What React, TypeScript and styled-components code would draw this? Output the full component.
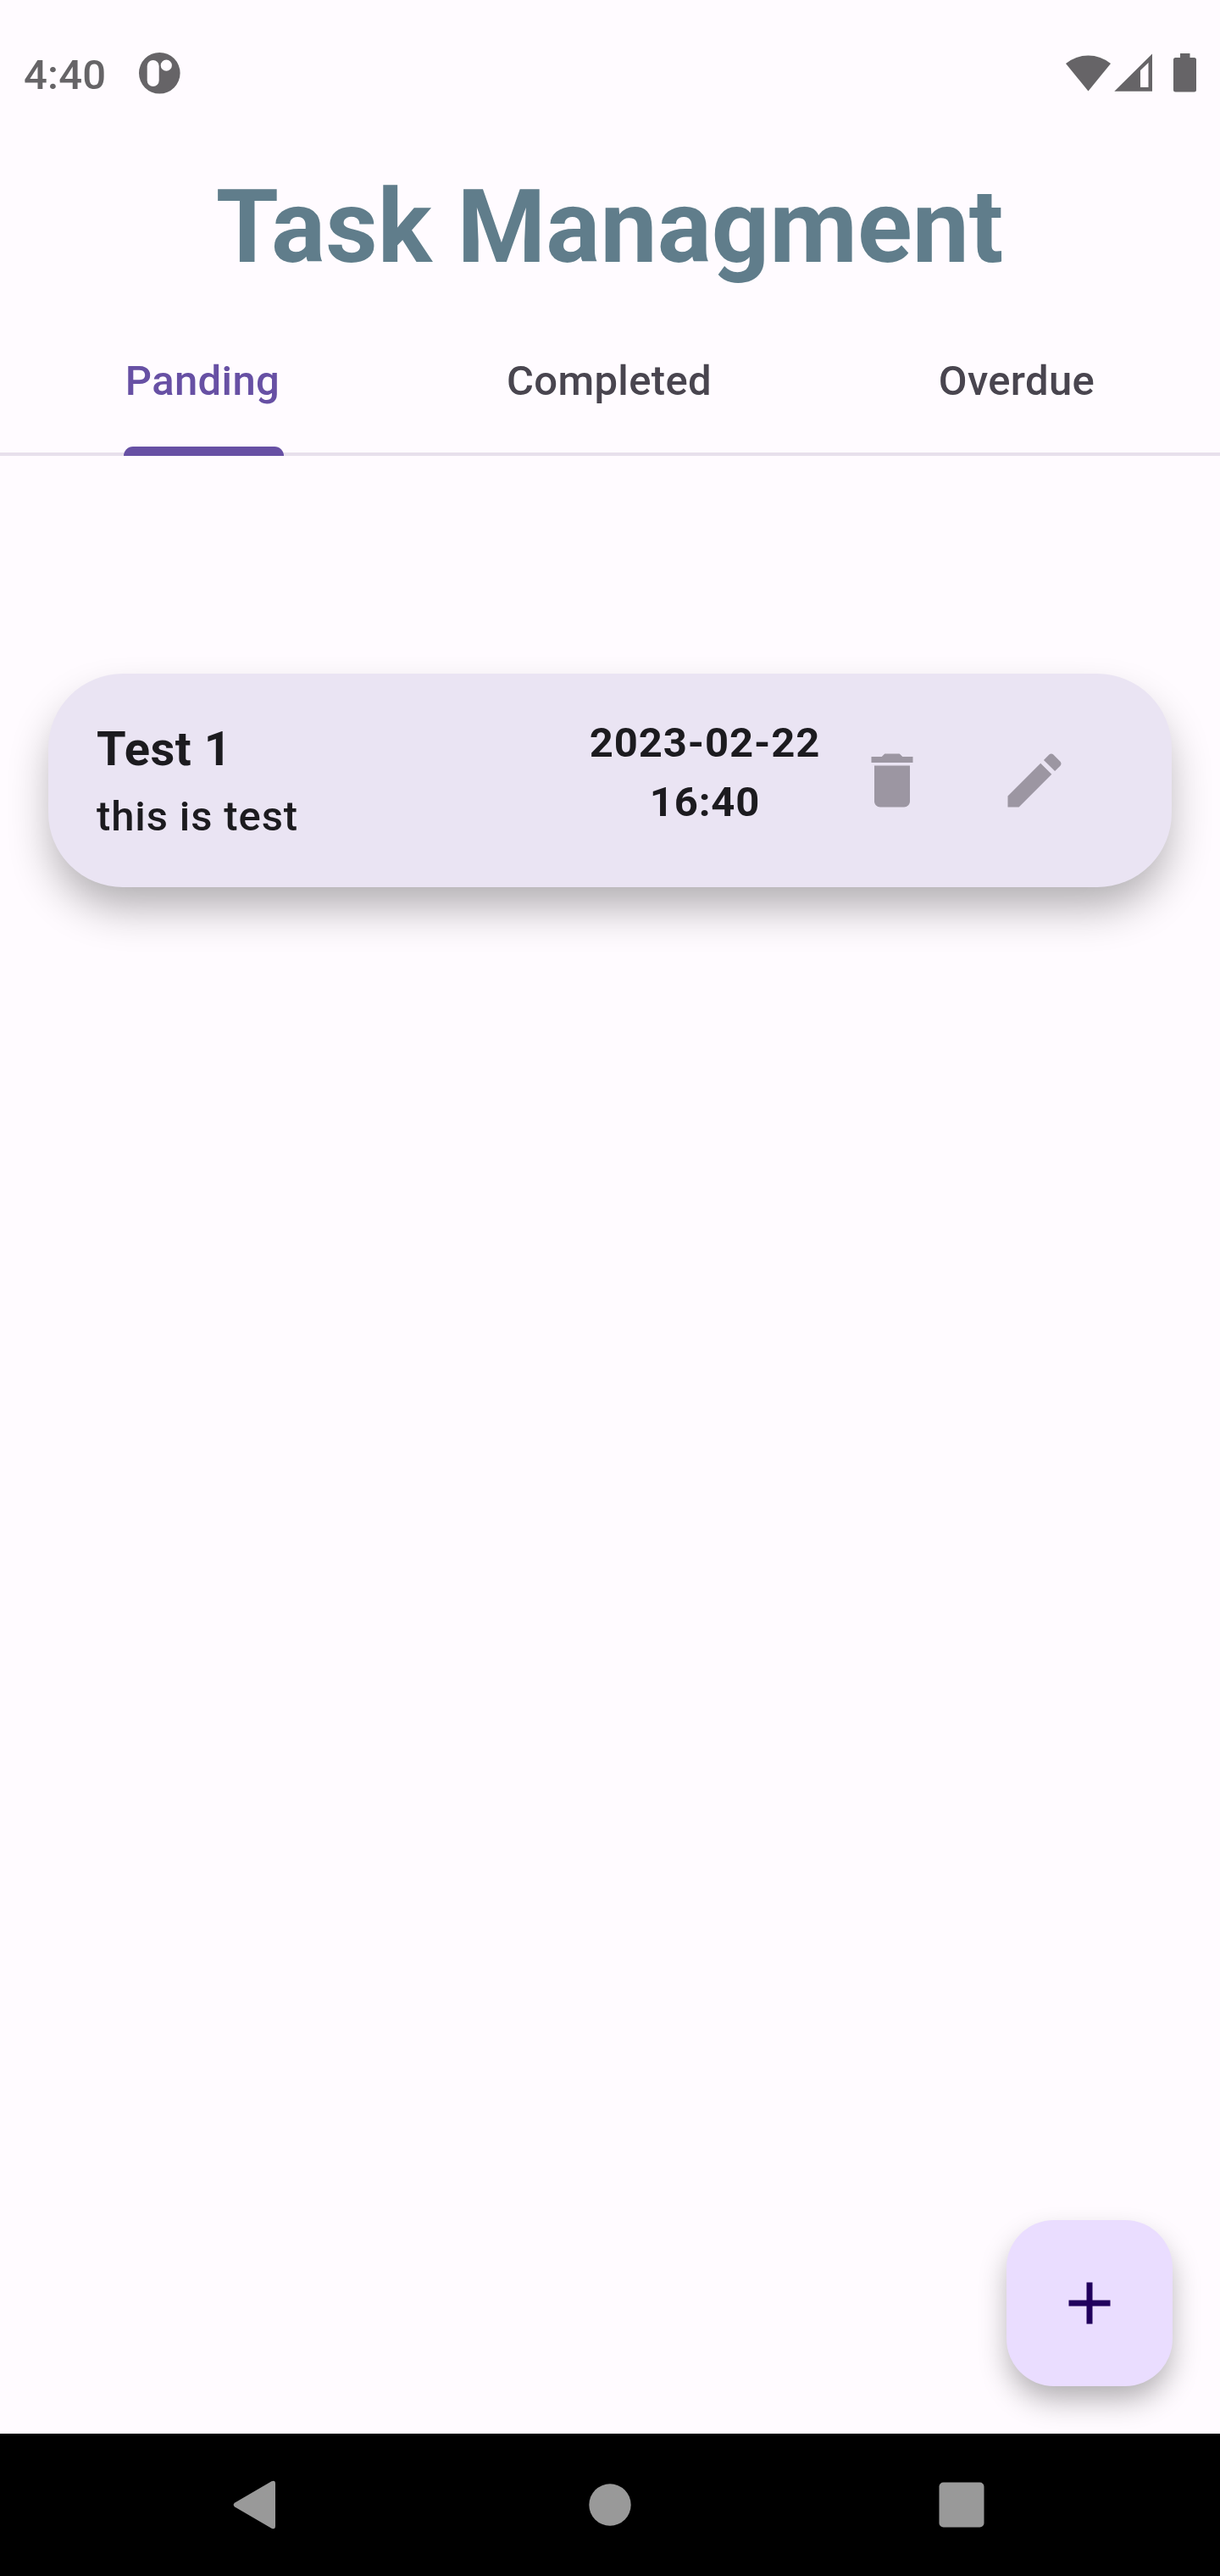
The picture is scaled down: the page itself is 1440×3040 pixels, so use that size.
import React from "react";
import styled, { createGlobalStyle } from "styled-components";

const GlobalStyle = createGlobalStyle`
  *, *::before, *::after { box-sizing: border-box; }
  body { margin: 0; background: #fffbff; }
`;

const Screen = styled.div`
  display: flex;
  flex-direction: column;
  width: 1440px;
  height: 3040px;
  overflow: hidden;
  background: #fffbff;
  color: #1c1b1f;
  font-family: Roboto, "Noto Sans", sans-serif;
`;

const StatusBar = styled.header`
  display: flex;
  align-items: center;
  height: 172px;
  padding: 0 27px 0 28px;
  color: #666467;
`;

const Clock = styled.time`
  width: 135px;
  padding-top: 6px;
  font-size: 49px;
  font-weight: 500;
  line-height: 58px;
  letter-spacing: 0.2px;
`;

const StatusIcon = styled.svg`
  display: block;
  fill: currentColor;
`;

const StatusIcons = styled.div`
  display: flex;
  margin-left: auto;
`;

const Title = styled.h1`
  margin: 0;
  height: 192px;
  padding: 24px 1px 0 0;
  font-size: 119.8px;
  font-weight: 700;
  line-height: 144px;
  text-align: center;
  color: #607d8b;
`;

const Tabs = styled.nav`
  display: grid;
  grid-template-columns: repeat(3, 1fr);
  height: 174px;
  border-bottom: 4px solid #e7e0ec;
`;

const Tab = styled.button<{ $active?: boolean }>`
  display: flex;
  flex-direction: column;
  align-items: center;
  justify-content: space-between;
  height: 174px;
  padding: 57px 0 0;
  border: 0;
  background: none;
  font: 500 49px/58px Roboto, "Noto Sans", sans-serif;
  letter-spacing: 0.35px;
  color: ${(p) => (p.$active ? "#6750a4" : "#49454f")};
`;

const TabLabel = styled.span`
  padding-right: 2px;

  ${Tab}:last-child & {
    padding-right: 0;
  }
`;

const Indicator = styled.span`
  width: 189px;
  height: 11px;
  border-radius: 11px 11px 0 0;
  background: #6750a4;
`;

const TaskList = styled.main`
  flex: 1;
  padding: 257px 57px 0;
`;

const TaskCard = styled.article`
  display: flex;
  align-items: center;
  height: 252px;
  padding: 0 120px 0 57px;
  border-radius: 88px;
  background: #eae4f3;
  box-shadow: 0 28px 52px -6px rgba(0, 0, 0, 0.32);
`;

const TaskText = styled.div`
  flex: 1;
  padding-bottom: 1px;
`;

const TaskName = styled.h2`
  margin: 0;
  font-size: 56px;
  font-weight: 700;
  line-height: 84px;
  letter-spacing: 0.525px;
`;

const TaskNote = styled.p`
  margin: 3px 0 0;
  font-size: 49px;
  font-weight: 500;
  line-height: 70px;
  letter-spacing: 0.875px;
`;

const DueDate = styled.time`
  width: 280px;
  margin-right: 39px;
  padding-bottom: 18px;
  font-size: 49px;
  font-weight: 700;
  line-height: 70px;
  letter-spacing: 0.875px;
  text-align: center;
  white-space: nowrap;
`;

const Actions = styled.div`
  display: flex;
  gap: 84px;
`;

const IconButton = styled.button`
  display: block;
  width: 84px;
  height: 84px;
  padding: 0;
  border: 0;
  background: none;
  color: #9c96a2;
`;

const Glyph = styled.svg`
  display: block;
  width: 84px;
  height: 84px;
  fill: currentColor;
`;

const FabRow = styled.div`
  display: flex;
  justify-content: flex-end;
  padding: 0 56px 56px 0;
`;

const Fab = styled.button`
  display: grid;
  place-items: center;
  width: 196px;
  height: 196px;
  padding: 0;
  border: 0;
  border-radius: 56px;
  background: #eaddff;
  color: #21005d;
  box-shadow: 0 18px 36px -4px rgba(0, 0, 0, 0.33);
`;

const SystemNav = styled.footer`
  display: grid;
  grid-template-columns: 84px 84px 84px;
  align-items: center;
  justify-content: space-between;
  height: 168px;
  padding: 0 261px;
  background: #000;
  color: #999;
`;

const NavGlyph = styled.svg`
  display: block;
  width: 84px;
  height: 84px;
  fill: currentColor;
`;

export default function App() {
  return (
    <>
      <GlobalStyle />
      <Screen>
        <StatusBar>
          <Clock>4:40</Clock>
          <StatusIcon width="50" height="50" viewBox="0 0 50 50">
            <path
              fillRule="evenodd"
              d="M25.3 1a24.3 24.3 0 1 0 0 48.600a24.3 24.3 0 1 0 0-48.600zM17.700 10a7 7 0 0 1 7 7v17a7 7 0 0 1-14 0v-17a7 7 0 0 1 7-7zM33.300 9.600a6.600 6.600 0 1 1 0 13.200a6.600 6.600 0 1 1 0-13.200z"
            />
          </StatusIcon>
          <StatusIcons>
            <StatusIcon width="156" height="50" viewBox="1257 61 156 50">
              <path d="M1284.500 107.500L1258 75A42 42 0 0 1 1311 75z" />
              <path fillRule="evenodd" d="M1315.300 107.700L1360 63.500V107.700zM1346 83V103H1355.500V74z" />
              <path d="M1393 63H1404.500V68H1409.500a2.500 2.500 0 0 1 2.500 2.500V106a2.500 2.500 0 0 1-2.500 2.500H1387.500a2.500 2.500 0 0 1-2.500-2.500V70.500a2.500 2.500 0 0 1 2.500-2.500H1393z" />
            </StatusIcon>
          </StatusIcons>
        </StatusBar>
        <Title>Task Managment</Title>
        <Tabs>
          <Tab $active>
            <TabLabel>Panding</TabLabel>
            <Indicator />
          </Tab>
          <Tab>
            <TabLabel>Completed</TabLabel>
          </Tab>
          <Tab>
            <TabLabel>Overdue</TabLabel>
          </Tab>
        </Tabs>
        <TaskList>
          <TaskCard>
            <TaskText>
              <TaskName>Test 1</TaskName>
              <TaskNote>this is test</TaskNote>
            </TaskText>
            <DueDate>
              2023-02-22
              <br />
              16:40
            </DueDate>
            <Actions>
              <IconButton aria-label="Delete">
                <Glyph viewBox="0 0 24 24">
                  <path d="M6 19c0 1.1.9 2 2 2h8c1.1 0 2-.9 2-2V7H6v12zM19 4h-3.500l-1-1h-5l-1 1H5v2h14V4z" />
                </Glyph>
              </IconButton>
              <IconButton aria-label="Edit">
                <Glyph viewBox="0 0 24 24">
                  <path d="M3 17.250V21h3.750L17.810 9.940l-3.750-3.750L3 17.250zM20.710 7.040c.39-.39.39-1.020 0-1.410l-2.340-2.340c-.39-.39-1.020-.39-1.410 0l-1.830 1.830 3.750 3.750 1.830-1.830z" />
                </Glyph>
              </IconButton>
            </Actions>
          </TaskCard>
        </TaskList>
        <FabRow>
          <Fab aria-label="Add">
            <Glyph viewBox="0 0 24 24">
              <path d="M19 13h-6v6h-2v-6H5v-2h6V5h2v6h6v2z" />
            </Glyph>
          </Fab>
        </FabRow>
        <SystemNav>
          <NavGlyph viewBox="0 0 84 84">
            <path d="M16.200 39.500Q13 42 16.200 44.500L59.500 69.700Q64 71.500 64 67V17Q64 12.500 59.500 14.300z" />
          </NavGlyph>
          <NavGlyph viewBox="0 0 84 84">
            <circle cx="42" cy="42" r="24.700" />
          </NavGlyph>
          <NavGlyph viewBox="0 0 84 84">
            <rect x="13.500" y="15.500" width="53" height="53" rx="5" />
          </NavGlyph>
        </SystemNav>
      </Screen>
    </>
  );
}
